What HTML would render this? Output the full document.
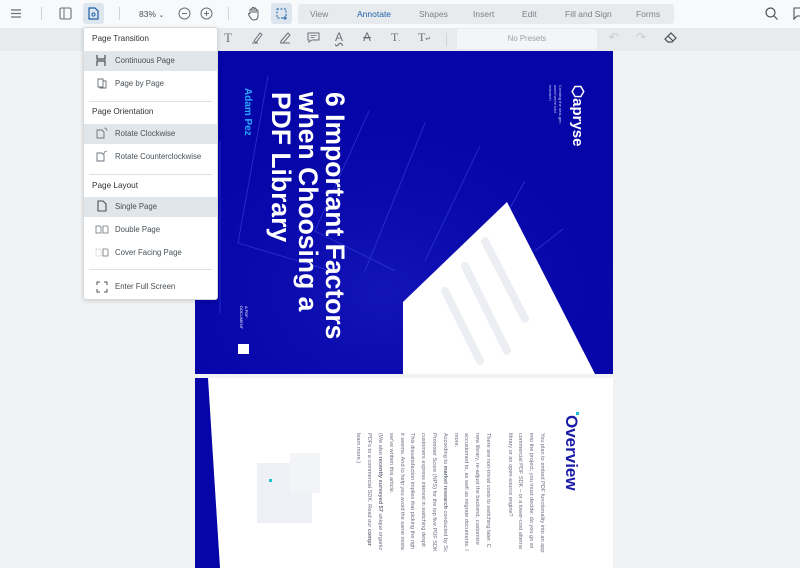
<!DOCTYPE html>
<html><head><meta charset="utf-8"><style>
*{margin:0;padding:0;box-sizing:border-box}
body{width:800px;height:561px;overflow:hidden;background:#f1f2f4;font-family:"Liberation Sans",sans-serif;position:relative;color:#485056}
.top{position:absolute;left:0;top:0;width:800px;height:28px;background:#f8f9fa}
.bar2{position:absolute;left:0;top:28px;width:800px;height:23px;background:#e8ebed}
.tabs{position:absolute;left:298px;top:4px;width:376px;height:20px;background:#e8ebed;border-radius:3px}
.tab{position:absolute;top:9px;font-size:8.5px;color:#7a8288}
.ic{position:absolute}
.menu{position:absolute;left:83px;top:27px;width:135px;height:273px;background:#fff;border:1px solid #d5d9dc;border-radius:3px;box-shadow:0 1px 4px rgba(0,0,0,.15);font-size:8px;color:#485056}
.menu .h{position:absolute;left:8px;font-size:8.2px;color:#333}
.menu .it{position:absolute;left:0;width:133px;height:20px;line-height:20px;padding-left:31px;font-size:7.8px;color:#485056}
.menu .sel{background:#e1e6ea}
.menu .sep{position:absolute;left:5px;width:123px;height:1px;background:#dde1e4}
.page1{position:absolute;left:195px;top:51px;width:418px;height:323px;background:#0505a8;overflow:hidden}
.page2{position:absolute;left:195px;top:378px;width:418px;height:190px;background:#fff;overflow:hidden}
.rot{position:absolute;transform-origin:0 0;transform:rotate(90deg);white-space:nowrap}
</style></head><body>
<div class="top"></div>
<div class="bar2"></div>
<svg class="ic" style="left:10px;top:8px" width="12" height="11"><path d="M1 2h10M1 5.5h10M1 9h10" stroke="#6b7278" stroke-width="1.2"/></svg>
<div class="ic" style="left:41px;top:7px;width:1px;height:13px;background:#d0d4d7"></div>
<svg class="ic" style="left:59px;top:7px" width="13" height="13"><rect x="1" y="1" width="11" height="11" rx="1.5" fill="none" stroke="#6b7278" stroke-width="1.1"/><path d="M5 1v11" stroke="#6b7278"/></svg>
<div class="ic" style="left:83px;top:3px;width:21px;height:21px;background:#dde5ee;border-radius:3px"></div>
<svg class="ic" style="left:88px;top:7px" width="11" height="13"><path d="M1 1h6l3 3v8H1z" fill="none" stroke="#1b5fa8" stroke-width="1.2"/><circle cx="5.5" cy="7.5" r="1.6" fill="none" stroke="#1b5fa8"/></svg>
<div class="ic" style="left:119px;top:7px;width:1px;height:13px;background:#d0d4d7"></div>
<div class="ic" style="left:139px;top:9px;font-size:8.5px;color:#485056">83%&nbsp;<span style="font-size:7px">⌄</span></div>
<svg class="ic" style="left:178px;top:7px" width="13" height="13"><circle cx="6.5" cy="6.5" r="5.5" fill="none" stroke="#6b7278"/><path d="M4 6.5h5" stroke="#6b7278"/></svg>
<svg class="ic" style="left:200px;top:7px" width="13" height="13"><circle cx="6.5" cy="6.5" r="5.5" fill="none" stroke="#6b7278"/><path d="M4 6.5h5M6.5 4v5" stroke="#6b7278"/></svg>
<div class="ic" style="left:228px;top:7px;width:1px;height:13px;background:#d0d4d7"></div>
<svg class="ic" style="left:247px;top:6px" width="13" height="15"><path d="M3 8V4a1 1 0 012 0v3V2.5a1 1 0 012 0V7V3a1 1 0 012 0v4V5a1 1 0 012 0v5c0 3-2 4-4 4s-3-1-4-3L1.5 8.5a1 1 0 011.5-1z" fill="none" stroke="#485056" stroke-width=".9"/></svg>
<div class="ic" style="left:271px;top:3px;width:21px;height:21px;background:#dde5ee;border-radius:3px"></div>
<svg class="ic" style="left:276px;top:8px" width="12" height="12"><rect x="1" y="1" width="9" height="9" fill="none" stroke="#1b5fa8" stroke-dasharray="2 1.5"/><path d="M9 8v4M7 10h4" stroke="#1b5fa8"/></svg>
<div class="tabs"></div>
<div class="tab" style="left:310px">View</div>
<div class="tab" style="left:357px;color:#1d63b0">Annotate</div>
<div class="tab" style="left:419px">Shapes</div>
<div class="tab" style="left:473px">Insert</div>
<div class="tab" style="left:522px">Edit</div>
<div class="tab" style="left:565px">Fill and Sign</div>
<div class="tab" style="left:636px">Forms</div>
<svg class="ic" style="left:765px;top:7px" width="13" height="13"><circle cx="5.5" cy="5.5" r="4.5" fill="none" stroke="#485056" stroke-width="1.2"/><path d="M9 9l3.5 3.5" stroke="#485056" stroke-width="1.2"/></svg>
<svg class="ic" style="left:793px;top:7px" width="8" height="13"><path d="M1 1h10v8H4l-3 3z" fill="none" stroke="#485056" stroke-width="1.1"/></svg>
<div class="ic" style="left:224px;top:30px;font-family:'Liberation Serif',serif;font-size:13px;color:#6b7278">T</div>
<svg class="ic" style="left:251px;top:31px" width="12" height="13"><path d="M3 10l6-8 2 1.5-6 8zM1 12h6" fill="none" stroke="#6b7278"/></svg>
<svg class="ic" style="left:279px;top:31px" width="12" height="13"><path d="M2 10l7-8 2 2-7 8H2zM1 12h10" fill="none" stroke="#6b7278"/></svg>
<svg class="ic" style="left:307px;top:32px" width="13" height="11"><path d="M1 1h11v7H5l-3 2V8H1z" fill="none" stroke="#6b7278"/><path d="M3.5 3.5h6M3.5 5.5h4" stroke="#6b7278" stroke-width=".8"/></svg>
<div class="ic" style="left:335px;top:30px;font-size:12px;color:#6b7278;text-decoration:underline wavy #6b7278">A</div>
<div class="ic" style="left:363px;top:30px;font-size:12px;color:#6b7278;text-decoration:line-through">A</div>
<div class="ic" style="left:391px;top:30px;font-family:'Liberation Serif',serif;font-size:12px;color:#6b7278">T<span style="font-size:7px">.</span></div>
<div class="ic" style="left:418px;top:30px;font-family:'Liberation Serif',serif;font-size:12px;color:#6b7278">T<span style="font-size:7px">↵</span></div>
<div class="ic" style="left:446px;top:33px;width:1px;height:13px;background:#d0d4d7"></div>
<div class="ic" style="left:457px;top:29px;width:140px;height:20px;background:#f3f5f6;border-radius:2px;text-align:center;line-height:20px;font-size:7.8px;color:#9aa1a6">No Presets</div>
<div class="ic" style="left:609px;top:30px;font-size:12px;color:#c9cdd0">↶</div>
<div class="ic" style="left:636px;top:30px;font-size:12px;color:#c9cdd0">↷</div>
<svg class="ic" style="left:664px;top:32px" width="13" height="11"><path d="M1 7l6-6 5 5-4 4H4zM4 4l5 5" fill="none" stroke="#485056" stroke-width="1.2"/></svg>
<div class="page1">
<svg width="418" height="323" style="position:absolute;left:0;top:0">
<defs><radialGradient id="g" cx="0.45" cy="0.75" r="0.7"><stop offset="0" stop-color="#2a2ccf" stop-opacity=".4"/><stop offset="1" stop-color="#0505a8" stop-opacity="0"/></radialGradient></defs>
<rect width="418" height="323" fill="url(#g)"/>
<g fill="none" stroke="#3a44d8" stroke-width="0.8" opacity=".7">
<path d="M73 25L43 192l100 30"/><path d="M25 90L25 262"/><path d="M174 60L120 180l80 40"/><path d="M230 72L170 220"/><path d="M285 95L230 210"/><path d="M330 130L280 220"/><path d="M368 178L340 200"/>
</g>
<polygon points="312,151 400,323 208,323 208,251" fill="#fff"/>
<g stroke="#eceef3" stroke-width="8" stroke-linecap="round"><path d="M290 190L330 268"/><path d="M270 215L312 300"/><path d="M250 240L285 310"/></g>
</svg>
<div class="rot" style="left:153px;top:41px;font-size:26.5px;font-weight:bold;color:#fff;line-height:27px">6 Important Factors<br>when Choosing a<br>PDF Library</div>
<div class="rot" style="left:58px;top:37px;font-size:10px;font-weight:bold;color:#29a8ff">Adam Pez</div>
<div class="rot" style="left:392px;top:34px;font-size:15px;color:#fff;font-weight:bold">⬡apryse</div>
<div class="rot" style="left:368px;top:34px;font-size:4px;color:#c8cdf5;line-height:5px">Creating the next-gen<br>world we're told<br>research</div>
<div class="rot" style="left:54px;top:255px;font-size:4px;color:#fff;line-height:5px">A PDF<br>DOCUMENT</div>
<div style="position:absolute;left:43px;top:293px;width:11px;height:10px;background:#fff"></div>
</div>
<div class="page2">
<svg width="418" height="190" style="position:absolute;left:0;top:0"><polygon points="0,0 13,0 25,190 0,190" fill="#0505a8"/>
<rect x="62" y="85" width="55" height="60" fill="#eef0f6"/><rect x="95" y="75" width="30" height="40" fill="#f3f4f8"/><rect x="74" y="101" width="3" height="3" fill="#17c3d6"/></svg>
<div style="position:absolute;left:381px;top:34px;width:3px;height:3px;background:#17c3d6"></div>
<div class="rot" style="left:386px;top:37px;font-size:17px;font-weight:bold;color:#1a1aa8">Overview</div>
<div class="rot" style="left:352px;top:55px;font-size:5.6px;color:#6a6f80;line-height:10.8px">You plan to embed PDF functionality into an app<br>into the project, you must decide: do you go wi<br>commercial PDF SDK – or a lower-cost alterna<br>library or an open-source engine?<br><span style="line-height:4px"> </span><br>There are non-trivial costs to switching later. C<br>new library, re-adjust the backend, customize<br>accustomed to, as well as migrate documents. I<br>more.<br>According to <b>market research</b> conducted by Sc<br>Promoter Score (NPS) for the top five PDF SDK<br>customers express interest in switching despit<br>This dissatisfaction implies that picking the righ<br>it seems. And to help you avoid the same mista<br>we've written this article.<br>(We also <b>recently surveyed 57</b> unique organiz<br>PDFs to a commercial SDK. Read our <b>compr</b><br>learn more.)</div>
</div>
<div class="menu">
<div class="h" style="top:6px">Page Transition</div>
<div class="it sel" style="top:23px">Continuous Page</div>
<svg class="ic" style="left:12px;top:27px" width="10" height="11"><path d="M1 0v4h8V0M1 11V6h8v5" fill="none" stroke="#485056" stroke-width="1.2"/></svg>
<div class="it" style="top:46px">Page by Page</div>
<svg class="ic" style="left:13px;top:50px" width="11" height="11"><path d="M1 1h5v8H1zM6 3h3v7H3V9" fill="none" stroke="#6b7278" stroke-width=".9"/></svg>
<div class="sep" style="top:73px"></div>
<div class="h" style="top:79px">Page Orientation</div>
<div class="it sel" style="top:96px">Rotate Clockwise</div>
<svg class="ic" style="left:12px;top:99px" width="12" height="12"><path d="M1 3h5l2 2v6H1z" fill="none" stroke="#6b7278" stroke-width=".9"/><path d="M8 1q3 0 3 3" fill="none" stroke="#6b7278" stroke-width=".8"/></svg>
<div class="it" style="top:119px">Rotate Counterclockwise</div>
<svg class="ic" style="left:12px;top:122px" width="12" height="12"><path d="M1 3h5l2 2v6H1z" fill="none" stroke="#6b7278" stroke-width=".9"/><path d="M8 4q0-3 3-3" fill="none" stroke="#6b7278" stroke-width=".8"/></svg>
<div class="sep" style="top:146px"></div>
<div class="h" style="top:153px">Page Layout</div>
<div class="it sel" style="top:169px">Single Page</div>
<svg class="ic" style="left:13px;top:172px" width="10" height="12"><path d="M1 1h5l3 3v7H1z" fill="none" stroke="#485056" stroke-width="1.1"/></svg>
<div class="it" style="top:192px">Double Page</div>
<svg class="ic" style="left:11px;top:197px" width="14" height="9"><path d="M1 1h4l1 1v6H1zM8 1h4l1 1v6H8z" fill="none" stroke="#6b7278" stroke-width=".8"/></svg>
<div class="it" style="top:215px">Cover Facing Page</div>
<svg class="ic" style="left:11px;top:220px" width="14" height="9"><path d="M1 1h4l1 1v6H1z" fill="none" stroke="#b0b5b9" stroke-width=".8" stroke-dasharray="1 1"/><path d="M8 1h4l1 1v6H8z" fill="none" stroke="#6b7278" stroke-width=".8"/></svg>
<div class="sep" style="top:241px"></div>
<div class="it" style="top:249px">Enter Full Screen</div>
<svg class="ic" style="left:12px;top:253px" width="12" height="12"><path d="M1 4V1h3M8 1h3v3M11 8v3H8M4 11H1V8" fill="none" stroke="#485056" stroke-width="1"/></svg>
</div>
</body></html>
